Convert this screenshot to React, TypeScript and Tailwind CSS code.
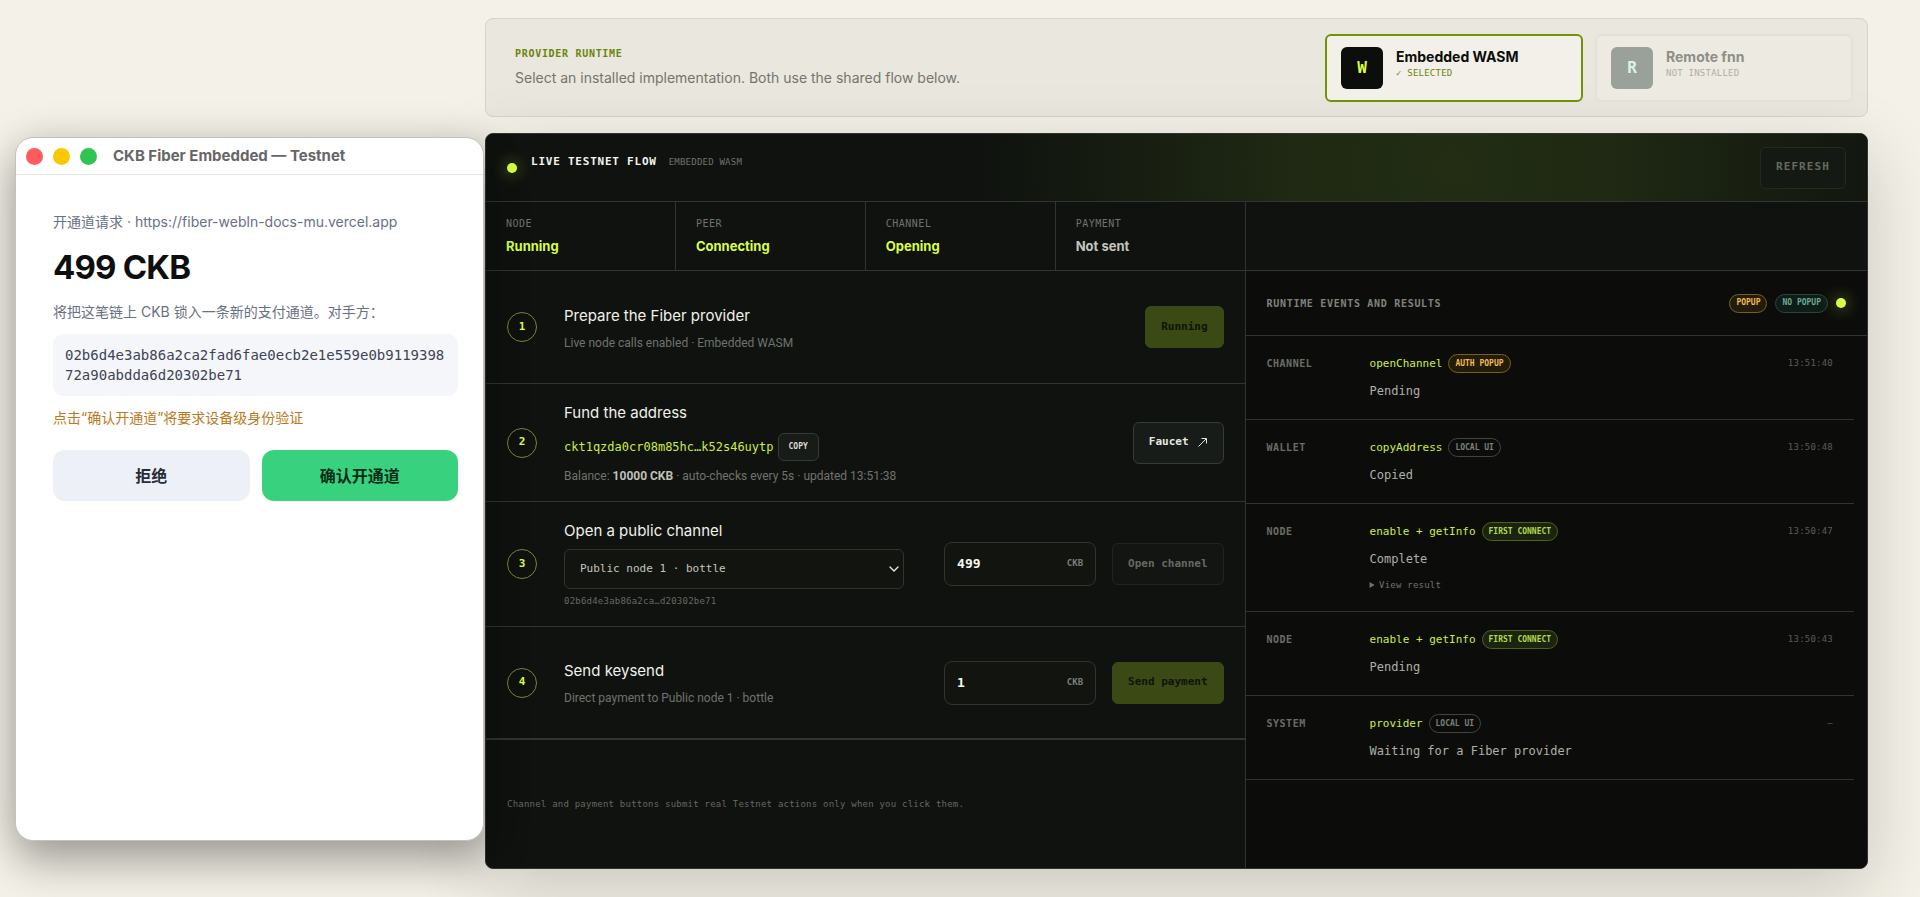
import React, { useState } from 'react';
import { ChevronDown } from 'lucide-react';

type Tone = 'auth' | 'local' | 'connect' | 'none';

interface RuntimeEvent {
  scope: string;
  method: string;
  badge: string;
  tone: Tone;
  status: string;
  time: string;
  hasResult?: boolean;
}

const events: RuntimeEvent[] = [
  { scope: 'CHANNEL', method: 'openChannel', badge: 'AUTH POPUP', tone: 'auth', status: 'Pending', time: '13:51:40' },
  { scope: 'WALLET', method: 'copyAddress', badge: 'LOCAL UI', tone: 'local', status: 'Copied', time: '13:50:48' },
  { scope: 'NODE', method: 'enable + getInfo', badge: 'FIRST CONNECT', tone: 'connect', status: 'Complete', time: '13:50:47', hasResult: true },
  { scope: 'NODE', method: 'enable + getInfo', badge: 'FIRST CONNECT', tone: 'connect', status: 'Pending', time: '13:50:43' },
  { scope: 'SYSTEM', method: 'provider', badge: 'LOCAL UI', tone: 'local', status: 'Waiting for a Fiber provider', time: '—' },
];

const stats = [
  { label: 'NODE', value: 'Running', active: true },
  { label: 'PEER', value: 'Connecting', active: true },
  { label: 'CHANNEL', value: 'Opening', active: true },
  { label: 'PAYMENT', value: 'Not sent', active: false },
];

const mono = "font-['DejaVu_Sans_Mono',monospace]";

const badgeTones: Record<Tone, string> = {
  auth: 'border-[#77601f] bg-[#231c0b] text-[#f0bd4f]',
  local: 'border-[#41443f] text-[#7d807b]',
  connect: 'border-[#4c611f] bg-[#1b240f] text-[#b2d84a]',
  none: 'border-[#28453d] bg-[#0f1d19] text-[#6fa895]',
};

const Badge = ({ tone, children }: { tone: Tone; children: React.ReactNode }) => (
  <span className={`${mono} flex h-[19px] items-center rounded-full border px-1.5 text-[8px] font-bold whitespace-nowrap ${badgeTones[tone]}`}>
    {children}
  </span>
);

const buttonBase = `${mono} flex h-[42px] items-center justify-center rounded-md border px-[15px] text-[11px] font-bold whitespace-nowrap`;

interface StepProps {
  index: number;
  title: string;
  labelFor?: string;
  last?: boolean;
  children: React.ReactNode;
  actions: React.ReactNode;
}

const Step = ({ index, title, labelFor, last, children, actions }: StepProps) => (
  <li
    className={`flex min-h-[113px] items-center border-[#32352f] px-[21px] py-[17px] ${last ? 'border-b-2' : 'border-b'}`}
  >
    <span
      className={`${mono} mr-[27px] flex size-[30px] shrink-0 items-center justify-center rounded-full border border-[#78853a] text-[11px] font-bold text-[#d9ff43]`}
    >
      {index}
    </span>
    <div className="min-w-0 flex-1">
      <h3 className="text-[15px] leading-6 text-[#f1f1ea]">
        {labelFor ? <label htmlFor={labelFor}>{title}</label> : title}
      </h3>
      {children}
    </div>
    <div className="ml-10 flex shrink-0 items-center gap-4">{actions}</div>
  </li>
);

const Hint = ({ children }: { children: React.ReactNode }) => (
  <p className="mt-[7px] font-['Roboto',sans-serif] text-[12px] leading-4 text-[#70736d]">{children}</p>
);

interface AmountProps {
  id: string;
  value: string;
  onChange: (value: string) => void;
}

const AmountField = ({ id, value, onChange }: AmountProps) => (
  <div className="flex h-11 w-[152px] items-center rounded-lg border border-[#32352f] bg-[#12140f] px-3">
    <input
      id={id}
      type="text"
      inputMode="numeric"
      className={`${mono} w-full min-w-0 bg-transparent text-[13px] font-bold text-[#f6f6ef] outline-none`}
      value={value}
      onChange={(e) => onChange(e.target.value)}
    />
    <label htmlFor={id} className={`${mono} text-[9px] font-bold text-[#7b7e78]`}>
      CKB
    </label>
  </div>
);

const WalletPopup = () => (
  <aside className="relative z-10 mt-[137px] flex min-h-[704px] w-[469px] shrink-0 flex-col self-start rounded-[18px] border border-[#c3c1ba] bg-white shadow-[0_22px_44px_rgba(0,0,0,0.3),0_0_40px_rgba(0,0,0,0.12)]">
    <header className="flex h-[37px] items-center gap-[10px] border-b border-[#e6e6e6] px-[10px]">
      <span className="size-[17px] rounded-full bg-[#ff5b5f]" />
      <span className="size-[17px] rounded-full bg-[#fac800]" />
      <span className="size-[17px] rounded-full bg-[#30c453]" />
      <h1 className="ml-1.5 text-[15px] font-bold text-[#666]">CKB Fiber Embedded — Testnet</h1>
    </header>
    <div className="pt-[35px] pr-[25px] pl-[37px] text-[14px]">
      <p className="leading-6 text-[#687084]">开通道请求 · https://fiber-webln-docs-mu.vercel.app</p>
      <p className="mt-3 text-[33px] leading-[42px] font-bold tracking-tight text-[#0d0e10]">499 CKB</p>
      <p className="mt-3 leading-6 text-[#687084]">将把这笔链上 CKB 锁入一条新的支付通道。对手方：</p>
      <p className="mt-[10px] rounded-[10px] bg-[#f5f6f9] px-3 py-[11px] font-['DejaVu_Sans_Mono',monospace] leading-5 break-all text-[#3c4456]">
        02b6d4e3ab86a2ca2fad6fae0ecb2e1e559e0b911939872a90abdda6d20302be71
      </p>
      <p className="mt-[10px] leading-6 text-[#b87a1d]">点击“确认开通道”将要求设备级身份验证</p>
      <div className="mt-5 grid grid-cols-2 gap-3 text-base font-bold">
        <button type="button" className="h-[51px] rounded-xl bg-[#edf0f6] text-[#252c3b]">
          拒绝
        </button>
        <button type="button" className="h-[51px] rounded-xl bg-[#38d27f] text-[#062b17]">
          确认开通道
        </button>
      </div>
    </div>
  </aside>
);

const ProviderRuntime = () => (
  <section className="flex min-h-[99px] items-center justify-between rounded-lg border border-[#d6d3cb] bg-[#eae7df] pr-[14px] pl-[29px]">
    <div className="pb-0.5">
      <h2 className={`${mono} text-[10px] leading-4 font-bold tracking-[0.07em] text-[#6c8408]`}>PROVIDER RUNTIME</h2>
      <p className="mt-1.5 text-[14px] leading-5 text-[#74756e]">
        Select an installed implementation. Both use the shared flow below.
      </p>
    </div>
    <div className="flex gap-3">
      <button
        type="button"
        aria-pressed="true"
        className="flex h-[68px] w-[258px] gap-[13px] rounded-md border-2 border-[#72900a] bg-[#f2f0e8] px-[14px] pt-[11px] text-left"
      >
        <span className={`${mono} flex size-[42px] items-center justify-center rounded-md bg-[#0b0e0a] text-base font-bold text-[#d9ff43]`}>
          W
        </span>
        <span className="flex flex-col">
          <span className="text-[14px] leading-5 font-bold text-[#0b0d0a]">Embedded WASM</span>
          <span className={`${mono} text-[9px] leading-3 tracking-wide text-[#6c8408]`}>✓ SELECTED</span>
        </span>
      </button>
      <button
        type="button"
        disabled
        className="flex h-[68px] w-[258px] gap-[13px] rounded-md border-2 border-[#e3e0d8] bg-[#edeae2] px-[14px] pt-[11px] text-left"
      >
        <span className={`${mono} flex size-[42px] items-center justify-center rounded-md bg-[#9aa19b] text-base font-bold text-[#dcf3e9]`}>
          R
        </span>
        <span className="flex flex-col">
          <span className="text-[14px] leading-5 font-bold text-[#8e8e87]">Remote fnn</span>
          <span className={`${mono} text-[9px] leading-3 tracking-wide text-[#b0aea6]`}>NOT INSTALLED</span>
        </span>
      </button>
    </div>
  </section>
);

const EventRow = ({ event }: { event: RuntimeEvent }) => (
  <li className="flex border-b border-[#32352f] px-[21px] pt-[18px] pb-[18px]">
    <span className={`${mono} w-[103px] shrink-0 text-[10px] leading-[19px] font-bold tracking-wider text-[#6a6d67]`}>
      {event.scope}
    </span>
    <div className="flex-1">
      <div className="flex items-center gap-1.5">
        <code className={`${mono} text-[11px] leading-[19px] text-[#cbee3f]`}>{event.method}</code>
        <Badge tone={event.tone}>{event.badge}</Badge>
      </div>
      <p className={`${mono} mt-2 text-[12px] leading-5 text-[#aeafa7]`}>{event.status}</p>
      {event.hasResult && (
        <details className={`${mono} mt-2 text-[9px] leading-4 text-[#70736d]`}>
          <summary className="cursor-pointer tracking-wide">View result</summary>
        </details>
      )}
    </div>
    <time className={`${mono} text-[9px] leading-[19px] tracking-wide text-[#5a5d57]`}>{event.time}</time>
  </li>
);

const App = () => {
  const [channelAmount, setChannelAmount] = useState('499');
  const [paymentAmount, setPaymentAmount] = useState('1');

  return (
    <div className="flex min-h-screen overflow-hidden bg-[#f4f1e8] pr-[52px] pl-[15px] font-['Inter','Noto_Sans_CJK_SC',sans-serif]">
      <WalletPopup />

      <main className="ml-px min-w-0 flex-1 pt-[18px] pb-[26px]">
        <ProviderRuntime />

        <section className="mt-4 overflow-hidden rounded-lg border border-[#32352f] bg-[#0f120f] shadow-[0_20px_70px_rgba(30,30,20,0.2)]">
          <header className="flex h-[68px] items-center border-b border-[#32352f] bg-[radial-gradient(circle_at_70%_50%,#222d14_0,#1f2913_160px,#0f120f_480px)] px-[21px]">
            <span className="size-[10px] rounded-full bg-[#d9ff43] shadow-[0_0_16px_rgba(217,255,67,0.6)]" />
            <div className={`${mono} ml-[14px] flex items-center gap-3 pb-3`}>
              <h2 className="text-[11px] leading-4 font-bold tracking-[0.07em] text-[#f4f4ed]">LIVE TESTNET FLOW</h2>
              <span className="text-[9px] leading-4 tracking-wide text-[#70736d]">EMBEDDED WASM</span>
            </div>
            <button type="button" disabled className={`${buttonBase} ml-auto border-[#242a20] bg-[#141a13] tracking-widest text-[#666b60]`}>
              REFRESH
            </button>
          </header>

          <div className="grid grid-cols-[55fr_45fr] border-b border-[#32352f]">
            <dl className="grid grid-cols-4">
              {stats.map((stat) => (
                <div key={stat.label} className="h-[68px] border-r border-[#32352f] pt-[14px] pl-5">
                  <dt className={`${mono} text-[10px] leading-4 tracking-wider text-[#70736d]`}>{stat.label}</dt>
                  <dd className={`mt-1 text-[13px] leading-5 font-bold ${stat.active ? 'text-[#d9ff43]' : 'text-[#c4c5bd]'}`}>
                    {stat.value}
                  </dd>
                </div>
              ))}
            </dl>
          </div>

          <div className="grid grid-cols-[55fr_45fr]">
            <div className="flex min-w-0 flex-col border-r border-[#32352f]">
              <ol>
                <Step
                  index={1}
                  title="Prepare the Fiber provider"
                  actions={
                    <button type="button" disabled className={`${buttonBase} border-[#3b4915] bg-[#3b4915] text-[#0f130c]`}>
                      Running
                    </button>
                  }
                >
                  <Hint>Live node calls enabled · Embedded WASM</Hint>
                </Step>

                <Step
                  index={2}
                  title="Fund the address"
                  actions={
                    <a href="#faucet" className={`${buttonBase} gap-2 border-[#373b36] bg-[#171c18] text-[#e6e7df]`}>
                      Faucet
                      <svg width="11" height="11" viewBox="0 0 11 11" fill="none" stroke="currentColor">
                        <path d="M1.5 9.5 9 2M4.5 1.5h5v5" />
                      </svg>
                    </a>
                  }
                >
                  <div className="mt-2 flex items-center gap-1">
                    <code className={`${mono} text-[12px] text-[#cbee3f]`}>ckt1qzda0cr08m85hc…k52s46uytp</code>
                    <button
                      type="button"
                      className={`${mono} h-7 rounded-md border border-[#363b36] bg-[#171c18] px-[10px] text-[8px] font-bold text-[#dcddd5]`}
                    >
                      COPY
                    </button>
                  </div>
                  <Hint>
                    Balance: <strong className="text-[#bfc0b8]">10000 CKB</strong> · auto-checks every 5s · updated 13:51:38
                  </Hint>
                </Step>

                <Step
                  index={3}
                  title="Open a public channel"
                  labelFor="peer"
                  actions={
                    <>
                      <AmountField id="channel-amount" value={channelAmount} onChange={setChannelAmount} />
                      <button type="button" disabled className={`${buttonBase} border-[#20231f] bg-[#121512] text-[#666963]`}>
                        Open channel
                      </button>
                    </>
                  }
                >
                  <div className="relative mt-1.5">
                    <select
                      id="peer"
                      className={`${mono} h-10 w-full appearance-none rounded-md border border-[#32352f] bg-[#12140f] px-[15px] text-[11px] text-[#c4c5bd]`}
                    >
                      <option>Public node 1 · bottle</option>
                    </select>
                    <ChevronDown className="pointer-events-none absolute top-3 right-0.5 size-4 text-[#e6e7df]" strokeWidth={2} />
                  </div>
                  <p className={`${mono} mt-1 text-[9px] leading-4 tracking-wide text-[#666963]`}>02b6d4e3ab86a2ca…d20302be71</p>
                </Step>

                <Step
                  index={4}
                  title="Send keysend"
                  last
                  actions={
                    <>
                      <AmountField id="payment-amount" value={paymentAmount} onChange={setPaymentAmount} />
                      <button type="button" disabled className={`${buttonBase} border-[#3b4915] bg-[#3b4915] text-[#0f130c]`}>
                        Send payment
                      </button>
                    </>
                  }
                >
                  <Hint>Direct payment to Public node 1 · bottle</Hint>
                </Step>
              </ol>
              <p className={`${mono} px-[21px] py-14 text-[9px] leading-4 tracking-wide text-[#666963]`}>
                Channel and payment buttons submit real Testnet actions only when you click them.
              </p>
            </div>

            <div className="min-w-0 bg-[#0c0d0b]">
              <header className="flex h-[65px] items-center gap-2 border-b border-[#32352f] px-[21px]">
                <h2 className={`${mono} mr-auto text-[10px] font-bold tracking-[0.07em] text-[#80837c]`}>RUNTIME EVENTS AND RESULTS</h2>
                <Badge tone="auth">POPUP</Badge>
                <Badge tone="none">NO POPUP</Badge>
                <span className="size-[10px] rounded-full bg-[#d9ff43] shadow-[0_0_16px_rgba(217,255,67,0.6)]" />
              </header>
              <ul className="mr-[13px]">
                {events.map((event) => (
                  <EventRow key={event.time} event={event} />
                ))}
              </ul>
            </div>
          </div>
        </section>
      </main>
    </div>
  );
};

export default App;
